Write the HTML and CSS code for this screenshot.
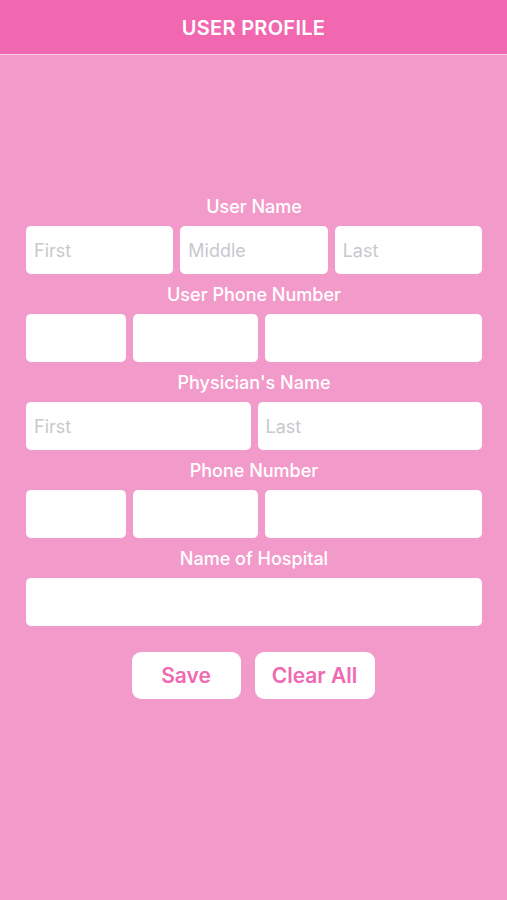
FILE: index.html
```html
<!DOCTYPE html>
<html>
<head>
<meta charset="utf-8">
<link rel="stylesheet" href="styles.css">
</head>
<body>
<header class="topbar"><h1 class="title">USER PROFILE</h1></header>
<main class="form">
  <div class="label">User Name</div>
  <div class="row">
    <input class="field grow" placeholder="First">
    <input class="field grow" placeholder="Middle">
    <input class="field grow" placeholder="Last">
  </div>
  <div class="label">User Phone Number</div>
  <div class="row">
    <input class="field w100">
    <input class="field w125">
    <input class="field grow">
  </div>
  <div class="label">Physician's Name</div>
  <div class="row">
    <input class="field grow" placeholder="First">
    <input class="field grow" placeholder="Last">
  </div>
  <div class="label">Phone Number</div>
  <div class="row">
    <input class="field w100">
    <input class="field w125">
    <input class="field grow">
  </div>
  <div class="label">Name of Hospital</div>
  <div class="row">
    <input class="field grow">
  </div>
  <div class="actions">
    <button class="btn save">Save</button>
    <button class="btn clear">Clear All</button>
  </div>
</main>
</body>
</html>
```
FILE: styles.css
```css
html, body {
  margin: 0;
  padding: 0;
}
body {
  width: 507px;
  height: 900px;
  background: #f29bca;
  font-family: Inter, "Liberation Sans", sans-serif;
  overflow: hidden;
}
.topbar {
  height: 54px;
  background: #f167b0;
  border-bottom: 1px solid #f9cfe4;
  display: flex;
  align-items: center;
  justify-content: center;
}
.title {
  margin: 2px 0 0;
  color: #ffffff;
  font-size: 20px;
  font-weight: 600;
  letter-spacing: 0.3px;
}
.form {
  padding: 131px 25px 0 26px;
  display: flex;
  flex-direction: column;
}
.label {
  color: #ffffff;
  font-size: 18px;
  font-weight: 500;
  line-height: 20px;
  text-align: center;
  padding: 11px 0 9px;
}
.row {
  display: flex;
  gap: 7px;
}
.field {
  height: 48px;
  box-sizing: border-box;
  border: none;
  border-radius: 5px;
  background: #ffffff;
  padding: 0 8px;
  font-family: Inter, "Liberation Sans", sans-serif;
  font-size: 18px;
  color: #333;
  min-width: 0;
  outline: none;
}
.field::placeholder {
  color: #c8c8cd;
}
.grow { flex: 1 1 0; }
.w100 { flex: 0 0 100px; }
.w125 { flex: 0 0 125px; }
.actions {
  display: flex;
  justify-content: center;
  gap: 14px;
  margin-top: 26px;
  padding-right: 2px;
}
.btn {
  height: 47px;
  border: none;
  border-radius: 9px;
  background: #ffffff;
  color: #f069b0;
  font-family: Inter, "Liberation Sans", sans-serif;
  font-size: 21px;
  font-weight: 600;
}
.save { width: 109px; }
.clear { width: 120px; }
```
